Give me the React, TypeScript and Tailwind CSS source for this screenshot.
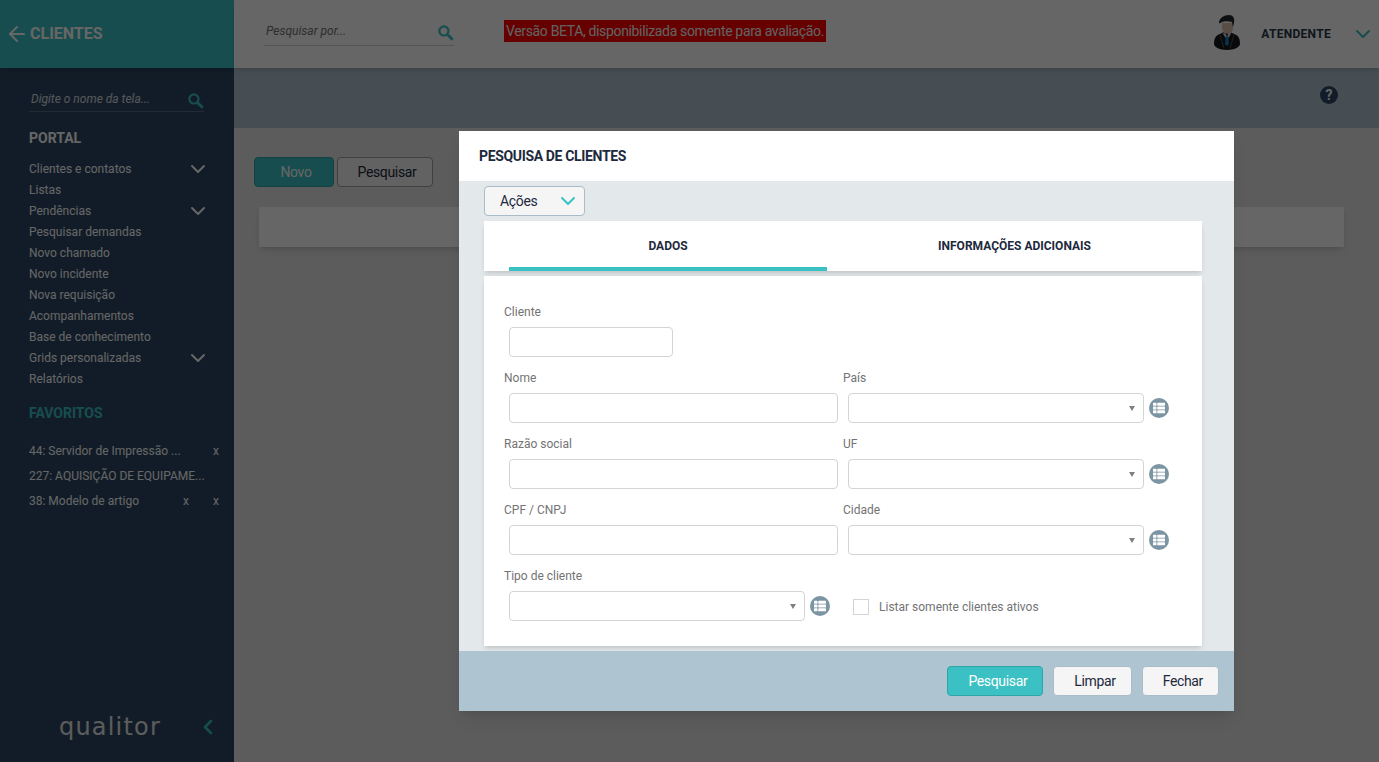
import React from 'react';
import { ArrowLeft, ChevronDown, ChevronLeft } from 'lucide-react';
import { FaThList } from 'react-icons/fa';

const menu = [
  { label: 'Clientes e contatos', more: true },
  { label: 'Listas' },
  { label: 'Pendências', more: true },
  { label: 'Pesquisar demandas' },
  { label: 'Novo chamado' },
  { label: 'Novo incidente' },
  { label: 'Nova requisição' },
  { label: 'Acompanhamentos' },
  { label: 'Base de conhecimento' },
  { label: 'Grids personalizadas', more: true },
  { label: 'Relatórios' },
];

function SearchIcon() {
  return (
    <svg width="20" height="20" viewBox="0 0 24 24" fill="none" stroke="#3bc1c3" className="mt-1 -mr-0.5">
      <circle cx="9.5" cy="9.5" r="5.5" strokeWidth="2.6" />
      <path d="M14 14l6 6" strokeWidth="3.4" />
    </svg>
  );
}

function Avatar() {
  return (
    <svg width="28" height="36" viewBox="0 0 28 36" className="-mt-1">
      <path d="M1 30c0-6 2-9 6-10l4-2h6l4 2c4 1 6 4 6 10 0 3-6 6-13 6S1 33 1 30z" fill="#16181c" />
      <path d="M7 21l4 13M21 21l-4 13" stroke="#4a4e55" strokeWidth="1" fill="none" />
      <path d="M11 18l3 4 3-4 1 2-4 6-4-6z" fill="#d8d8d8" />
      <path d="M13 22h2l1 8-2 2-2-2z" fill="#1f7fc4" />
      <path d="M9 9h11v5c0 3-2 6-5 6-3 0-6-3-6-6z" fill="#dcc3b0" />
      <path d="M6 9c0-5 5-8 10-8 4 0 6 3 5 8l-1 4-1-5c-3-1-8-1-10 0 0 0-3 2-3 1z" fill="#23262c" />
    </svg>
  );
}

function ListIcon() {
  return (
    <div className="w-5 h-5 shrink-0 rounded-full bg-[#7c95a3] flex items-center justify-center text-white">
      <FaThList size={12} />
    </div>
  );
}

function Label({ children }: { children: React.ReactNode }) {
  return <div className="leading-6 text-neutral-500">{children}</div>;
}

function TextField({ label, className }: { label: string; className?: string }) {
  return (
    <div>
      <Label>{label}</Label>
      <input className={`mt-0.75 ml-1.25 block h-7.5 bg-white border border-neutral-300 rounded-sm ${className ?? 'w-82.25'}`} />
    </div>
  );
}

function SelectBox() {
  return (
    <div className="flex items-center gap-1.25">
      <div className="w-74 h-7.5 bg-white border border-neutral-300 rounded-sm flex items-center justify-end pr-2">
        <svg width="6" height="5" viewBox="0 0 6 5">
          <path d="M0 0h6L3 5z" fill="#808080" />
        </svg>
      </div>
      <ListIcon />
    </div>
  );
}

function SelectField({ label }: { label: string }) {
  return (
    <div>
      <Label>{label}</Label>
      <div className="mt-0.75 ml-1.25">
        <SelectBox />
      </div>
    </div>
  );
}

function Button({ children, primary }: { children: React.ReactNode; primary?: boolean }) {
  return (
    <button
      className={`h-7.5 pl-5 pr-3.75 rounded-sm border text-sm tracking-tight ${
        primary ? 'bg-[#3bc1c3] border-[#2fa5a7] text-white' : 'bg-neutral-100 border-[#a9bcc8] text-slate-800'
      }`}
    >
      {children}
    </button>
  );
}

export default function App() {
  return (
    <div className="relative h-screen overflow-hidden flex bg-neutral-200 font-['Roboto',sans-serif] text-xs">
      <aside className="w-[234px] shrink-0 flex flex-col bg-[#2d4864] text-white">
        <div className="h-17 shrink-0 bg-[#3bc1c3] flex items-center gap-px pl-1.25 shadow-md">
          <ArrowLeft size={24} strokeWidth={2} />
          <span className="text-base font-bold">CLIENTES</span>
        </div>
        <div className="flex-1 flex flex-col pl-7.25 pr-7.5">
          <div className="mt-5 h-6 flex items-center justify-between border-b border-white/20 pb-0.5 pl-0.5">
            <span className="italic text-white/80">Digite o nome da tela...</span>
            <SearchIcon />
          </div>
          <h2 className="mt-4 text-sm font-bold leading-5">PORTAL</h2>
          <ul className="mt-2.5">
            {menu.map((item) => (
              <li key={item.label} className="h-5.25 flex items-center justify-between">
                {item.label}
                {item.more && <ChevronDown size={24} strokeWidth={2} className="-mr-1.5" />}
              </li>
            ))}
          </ul>
          <h2 className="mt-3.5 text-sm font-bold leading-5 text-[#3bc1c3]">FAVORITOS</h2>
          <ul className="mt-4.5 -mr-3.75 space-y-1.25 leading-5">
            <li className="flex justify-between">
              <span>44: Servidor de Impressão ...</span>
              <span>x</span>
            </li>
            <li>227: AQUISIÇÃO DE EQUIPAME...</li>
            <li className="flex gap-6 justify-end">
              <span className="mr-auto">38: Modelo de artigo</span>
              <span>x</span>
              <span>x</span>
            </li>
          </ul>
          <div className="mt-auto mb-4.75 pl-7.5 -mr-4 flex items-center justify-between">
            <span className="font-['DejaVu_Sans',sans-serif] text-2xl tracking-wider leading-8 text-neutral-200">qualitor</span>
            <ChevronLeft size={24} strokeWidth={2.5} className="text-[#3bc1c3]" />
          </div>
        </div>
      </aside>

      <main className="flex-1 flex flex-col min-w-0">
        <header className="relative z-10 h-17 shrink-0 bg-white flex items-center shadow-md">
          <div className="ml-7.5 w-47.5 h-7 -mt-1 flex items-center justify-between border-b border-neutral-300 pb-0.5 pl-0.5">
            <span className="italic text-neutral-500">Pesquisar por...</span>
            <SearchIcon />
          </div>
          <div className="ml-12.5 -mt-1.5 h-5.5 px-0.5 flex items-center bg-[#ff0000] text-sm tracking-tight text-neutral-100 whitespace-nowrap">
            Versão BETA, disponibilizada somente para avaliação.
          </div>
          <div className="ml-auto mr-1 flex items-center">
            <Avatar />
            <span className="ml-5 font-bold tracking-wide text-[#27374a]">ATENDENTE</span>
            <ChevronDown size={24} strokeWidth={2} className="ml-5 text-[#3bc1c3]" />
          </div>
        </header>
        <div className="h-15 shrink-0 bg-[#aec4d1] flex items-center justify-end pr-10.25">
          <div className="w-4.5 h-4.5 rounded-full bg-[#2d4864] text-white flex items-center justify-center text-sm font-bold mb-1.5">
            ?
          </div>
        </div>
        <div className="flex-1 pt-7.25 pl-5 pr-8.75">
          <div className="flex gap-0.75 text-sm tracking-tight">
            <button className="w-20 h-7.5 pl-1 rounded-sm bg-[#3bc1c3] border border-[#2fa5a7] text-white">Novo</button>
            <button className="w-24 h-7.5 pl-1 rounded-sm bg-neutral-100 border border-neutral-400 text-slate-800">Pesquisar</button>
          </div>
          <div className="mt-5 ml-1.25 h-10 bg-white shadow-md" />
        </div>
      </main>

      {/* backdrop + modal */}
      <div className="absolute inset-0 z-20 bg-black/60" />
      <div className="absolute z-30 left-[459px] top-[131px] w-[775px] flex flex-col shadow-lg">
        <div className="h-12.5 bg-white flex items-center pl-5 text-sm tracking-tight font-bold text-slate-800">PESQUISA DE CLIENTES</div>
        <div className="bg-[#e3e8eb] pl-6.25 pr-8 pt-1.25 pb-1.25">
          <button className="w-25.25 h-7.5 pl-3.75 pr-1 flex items-center justify-between bg-neutral-100 border border-[#a9bcc8] rounded-sm text-sm tracking-tight text-slate-800">
            Ações
            <ChevronDown size={24} strokeWidth={2} className="text-[#3bc1c3]" />
          </button>
          <div className="mt-1.25 bg-white shadow-md flex pl-6.25 font-bold text-slate-800">
            <div className="w-79.5 pt-3.75">
              <div className="leading-5 text-center pb-2.75">DADOS</div>
              <div className="h-1 bg-[#3bc1c3]" />
            </div>
            <div className="flex-1 pt-3.75 leading-5 text-center">INFORMAÇÕES ADICIONAIS</div>
          </div>
          <div className="mt-1.25 bg-white shadow-md pl-5 pr-5 pt-6 pb-6.25">
            <TextField label="Cliente" className="w-41" />
            <div className="mt-2.25 grid grid-cols-2 gap-y-2.25">
              <TextField label="Nome" />
              <SelectField label="País" />
              <TextField label="Razão social" />
              <SelectField label="UF" />
              <TextField label="CPF / CNPJ" />
              <SelectField label="Cidade" />
              <div className="col-span-2 flex items-end">
                <SelectField label="Tipo de cliente" />
                <div className="ml-5.75 h-7 flex items-center gap-2.5 text-neutral-500">
                  <div className="w-4 h-4 bg-white border border-neutral-300" />
                  Listar somente clientes ativos
                </div>
              </div>
            </div>
          </div>
        </div>
        <div className="h-15 bg-[#aec4d1] flex items-center justify-end gap-2.5 pr-3.75">
          <Button primary>Pesquisar</Button>
          <Button>Limpar</Button>
          <Button>Fechar</Button>
        </div>
      </div>
    </div>
  );
}
